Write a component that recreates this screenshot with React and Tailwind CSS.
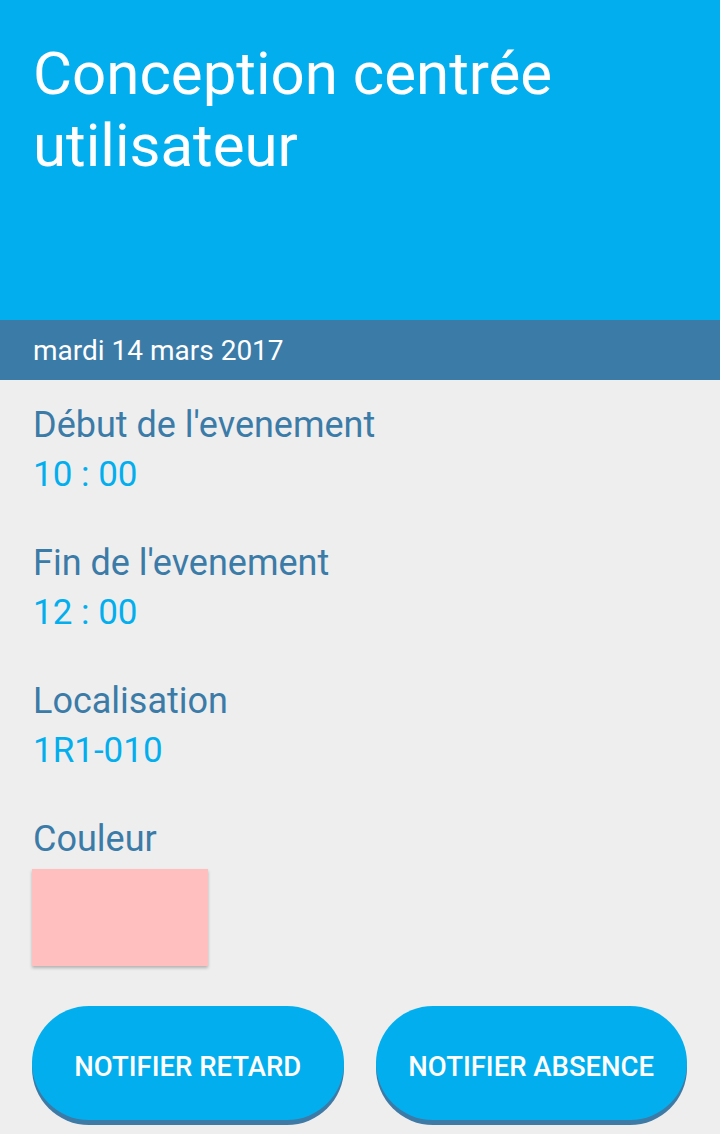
export default function App() {
  const rows = [
    { label: "Début de l'evenement", value: '10 : 00' },
    { label: "Fin de l'evenement", value: '12 : 00' },
    { label: 'Localisation', value: '1R1-010' },
  ];

  return (
    <div className="min-h-screen bg-[#eeeeee] font-['Roboto',sans-serif]">
      {/* Header */}
      <div className="h-[320px] bg-[#03aeee] px-[33px] pt-[38px]">
        <h1 className="text-[60px] leading-[72px] font-normal text-white">
          Conception centrée utilisateur
        </h1>
      </div>

      {/* Date bar */}
      <div className="h-[60px] bg-[#3b7ba8] px-[33px] pt-[2px] flex items-center">
        <span className="text-[28px] text-white">mardi 14 mars 2017</span>
      </div>

      {/* Details */}
      <div className="px-[33px] pt-[21px]">
        {rows.map((r) => (
          <div key={r.label} className="mb-[40px]">
            <div className="text-[36px] leading-[49px] text-[#3b7ba8]">{r.label}</div>
            <div className="text-[35px] leading-[49px] text-[#03aeee]">{r.value}</div>
          </div>
        ))}
        <div className="text-[36px] leading-[49px] text-[#3b7ba8]">Couleur</div>
        <div className="mt-[5px] w-[176px] h-[97px] -ml-px bg-[#ffbfbf] shadow-[0_2px_3px_rgba(0,0,0,0.25)]"></div>

        {/* Buttons */}
        <div className="mt-[40px] -ml-px flex gap-[32px]">
          <button className="w-[312px] h-[114px] pt-[8px] rounded-full bg-[#03aeee] text-white text-[27.5px] font-medium shadow-[0_5px_0_#3d7aa6]">
            NOTIFIER RETARD
          </button>
          <button className="w-[312px] h-[114px] pt-[8px] rounded-full bg-[#03aeee] text-white text-[27.5px] font-medium shadow-[0_5px_0_#3d7aa6]">
            NOTIFIER ABSENCE
          </button>
        </div>
      </div>
    </div>
  );
}
